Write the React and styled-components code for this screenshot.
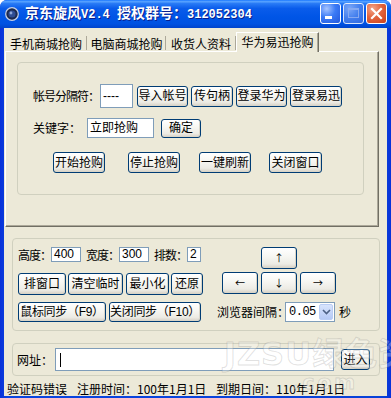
import React from "react";
import styled, { createGlobalStyle } from "styled-components";

const Global = createGlobalStyle`
  html, body { margin: 0; padding: 0; background: #ffffff; }
  body {
    font-family: "Liberation Sans", "Noto Sans CJK SC", sans-serif;
    font-size: 12px;
    color: #000;
  }
  * { box-sizing: border-box; }
`;

const Win = styled.div`
  position: relative;
  width: 391px;
  height: 398px;
  display: flex;
  flex-direction: column;
  background: linear-gradient(90deg, #0831D9 0%, #0A44E0 2%, #0842D8 98%, #0831D9 100%);
  border-radius: 7px 7px 0 0;
  overflow: hidden;
`;

const TitleBar = styled.div`
  flex: none;
  height: 28px;
  display: flex;
  align-items: center;
  padding: 0 4px 1px 5px;
  background: linear-gradient(
    #1A77FF 0%,
    #5AA4FF 6%,
    #2A7CF6 12%,
    #0A5CEB 30%,
    #0055E6 60%,
    #0052E2 85%,
    #0043CC 100%
  );
`;

const TitleText = styled.div`
  margin-left: 6px;
  color: #ffffff;
  font-family: "Noto Sans CJK SC", sans-serif;
  font-weight: 700;
  font-size: 14px;
  line-height: 16px;
  white-space: nowrap;
  text-shadow: 1px 1px 0 #0A1E8C;
`;

const Mono = styled.span`
  font-family: "Liberation Mono", monospace;
  font-size: 12px;
  font-weight: 700;
`;

const TitleButtons = styled.div`
  margin-left: auto;
  display: flex;
  gap: 2px;
`;

const CapBtn = styled.div`
  width: 21px;
  height: 21px;
  border: 1px solid #ffffff;
  border-radius: 3px;
  display: flex;
  align-items: center;
  justify-content: center;
  background: ${(p) =>
    p.$kind === "close"
      ? "radial-gradient(circle at 30% 25%, #F3A58A 0%, #E2653F 45%, #C8401A 100%)"
      : p.$kind === "max"
      ? "radial-gradient(circle at 30% 25%, #8FB4FA 0%, #4F86EE 50%, #3A6EE0 100%)"
      : "radial-gradient(circle at 30% 25%, #A6C4FF 0%, #3B7BF6 45%, #2257DC 100%)"};
  opacity: ${(p) => (p.$kind === "max" ? 0.85 : 1)};
`;

const Content = styled.div`
  flex: 1;
  margin: 0 4px 2px 4px;
  background: #ECE9D8;
  display: flex;
  flex-direction: column;
`;

const TabStrip = styled.div`
  flex: none;
  display: flex;
  align-items: flex-end;
  height: 23px;
  padding: 4px 0 0 1px;
  position: relative;
  z-index: 2;
`;

const Tab = styled.div`
  position: relative;
  width: ${(p) => p.$w}px;
  height: ${(p) => (p.$active ? 20 : 16)}px;
  margin-bottom: ${(p) => (p.$active ? -1 : 0)}px;
  display: flex;
  align-items: center;
  justify-content: center;
  font-family: "Noto Sans CJK SC", sans-serif;
  font-size: 12px;
  white-space: nowrap;
  background: #ECE9D8;
  ${(p) =>
    p.$active
      ? `border-top: 1px solid #ffffff;
         border-left: 1px solid #ffffff;
         border-right: 1px solid #716F64;
         box-shadow: inset -1px 0 0 #ACA899;
         padding-bottom: 3px;`
      : `&::after {
           content: "";
           position: absolute;
           right: 0;
           top: 1px;
           height: 14px;
           width: 1px;
           background: #ACA899;
           box-shadow: 1px 0 0 #ffffff;
         }`}
`;

const Panel = styled.div`
  flex: none;
  margin-left: 1px;
  width: 374px;
  height: 176px;
  border-top: 1px solid #ffffff;
  border-left: 1px solid #ffffff;
  border-right: 1px solid #716F64;
  border-bottom: 1px solid #716F64;
  box-shadow: inset -1px -1px 0 #ACA899;
  padding: 10px 0 0 11px;
`;

const Group = styled.div`
  flex: none;
  width: ${(p) => p.$w}px;
  height: ${(p) => p.$h}px;
  margin: ${(p) => p.$m || "0"};
  border: 1px solid #D0D0BF;
  border-radius: 4px;
  padding: ${(p) => p.$pad || "0"};
`;

const Row = styled.div`
  display: flex;
  align-items: center;
  height: ${(p) => p.$h}px;
  margin-top: ${(p) => p.$mt || 0}px;
  padding-left: ${(p) => p.$pl || 0}px;
`;

const Label = styled.span`
  flex: none;
  width: ${(p) => (p.$w ? `${p.$w}px` : "auto")};
  margin-left: ${(p) => p.$ml || 0}px;
  white-space: nowrap;
  font-family: "Noto Sans CJK SC", sans-serif;
  font-size: 12px;
  line-height: 14px;
  letter-spacing: ${(p) => p.$ls || 0}px;
`;

const TextBox = styled.div`
  flex: none;
  width: ${(p) => p.$w}px;
  height: ${(p) => p.$h}px;
  background: #ffffff;
  border: 1px solid #7F9DB9;
  display: flex;
  align-items: center;
  padding-left: 2px;
  white-space: nowrap;
  overflow: hidden;
  font-size: 12px;
  line-height: 13px;
`;

const Caret = styled.span`
  width: 1px;
  height: 14px;
  background: #000;
  margin-left: 2px;
`;

const Btn = styled.div`
  flex: none;
  width: ${(p) => p.$w}px;
  height: ${(p) => p.$h}px;
  margin-left: ${(p) => p.$ml || 0}px;
  border: 1px solid #003C74;
  border-radius: 3px;
  background: linear-gradient(#FFFFFF 0%, #F7F7F3 40%, #ECEBE4 80%, #D6D0C5 100%);
  box-shadow: inset -1px -1px 0 #D9D5C8;
  display: flex;
  align-items: center;
  justify-content: center;
  white-space: nowrap;
  font-family: "Liberation Sans", "Noto Sans CJK SC", sans-serif;
  font-size: 12px;
  line-height: 14px;
  letter-spacing: ${(p) => p.$ls || 0}px;
`;

const Gap = styled.div`
  height: ${(p) => p.$h}px;
  flex: none;
`;

const Grid2 = styled.div`
  display: grid;
  grid-template-columns: 199px auto;
  grid-template-rows: 48px 20px;
  row-gap: 7px;
`;

const Col = styled.div`
  display: flex;
  flex-direction: column;
`;

const ArrowPad = styled.div`
  margin-left: 5px;
  display: grid;
  grid-template-columns: repeat(3, 36px);
  grid-template-rows: 22px 22px;
  column-gap: 3px;
  row-gap: 3px;
`;

const ArrowBtn = styled(Btn)`
  grid-column: ${(p) => p.$col};
  grid-row: ${(p) => p.$row};
  width: 36px;
  height: 22px;
  font-family: "Noto Sans CJK SC", sans-serif;
  font-size: 10px;
`;

const Select = styled.div`
  flex: none;
  width: 50px;
  height: 20px;
  background: #ffffff;
  border: 1px solid #7F9DB9;
  display: flex;
  align-items: center;
  padding: 1px;
`;

const SelectText = styled.span`
  flex: 1;
  padding-left: 2px;
  font-family: "Liberation Mono", monospace;
  font-size: 12px;
  letter-spacing: -0.5px;
`;

const DropBtn = styled.div`
  width: 14px;
  height: 16px;
  border-radius: 2px;
  border: 1px solid #BACDF5;
  background: linear-gradient(#D8E4FC, #B5C9F5);
  display: flex;
  align-items: center;
  justify-content: center;
`;

const Status = styled.div`
  flex: none;
  height: 20px;
  display: flex;
  padding: 6px 0 0 3px;
`;

const StatusItem = styled.span`
  flex: none;
  width: ${(p) => (p.$w ? `${p.$w}px` : "auto")};
  white-space: nowrap;
  font-family: "Noto Sans CJK SC", sans-serif;
  font-size: 12px;
  line-height: 14px;
`;

const Watermark = styled.div`
  position: absolute;
  left: 224px;
  top: 338px;
  pointer-events: none;
  font-family: "DejaVu Sans", "Noto Sans CJK SC", sans-serif;
  font-weight: 700;
  white-space: nowrap;
  color: rgba(255, 255, 255, 0.3);
  -webkit-text-stroke: 1px rgba(120, 120, 120, 0.22);
  line-height: 1;
`;

const WmLine = styled.div`
  font-size: ${(p) => p.$size}px;
  margin-left: ${(p) => p.$ml || 0}px;
  margin-top: ${(p) => p.$mt || 0}px;
  letter-spacing: ${(p) => p.$ls || 0}px;
`;

function AppIcon() {
  return (
    <svg width="14" height="14" viewBox="0 0 14 14">
      <circle cx="7" cy="7" r="6.3" fill="#1C2A4E" stroke="#C9D2E6" strokeWidth="1.2" />
      <circle cx="7" cy="7" r="3.6" fill="#2F4D93" />
      <circle cx="6" cy="6" r="1.4" fill="#8FA8DA" />
    </svg>
  );
}

export default function App() {
  return (
    <>
      <Global />
      <Win>
        <TitleBar>
          <AppIcon />
          <TitleText>
            京东旋风<Mono>V2.4 </Mono>授权群号：<Mono>312052304</Mono>
          </TitleText>
          <TitleButtons>
            <CapBtn $kind="min">
              <svg width="19" height="19" viewBox="0 0 19 19">
                <rect x="4" y="12" width="7" height="3" fill="#ffffff" />
              </svg>
            </CapBtn>
            <CapBtn $kind="max">
              <svg width="19" height="19" viewBox="0 0 19 19">
                <rect x="4.5" y="4.5" width="10" height="9" fill="none" stroke="#9DB8F2" strokeWidth="1" />
                <rect x="4" y="4" width="11" height="2" fill="#9DB8F2" />
              </svg>
            </CapBtn>
            <CapBtn $kind="close">
              <svg width="19" height="19" viewBox="0 0 19 19">
                <path d="M5 5 L14 14 M14 5 L5 14" stroke="#ffffff" strokeWidth="2.2" strokeLinecap="square" />
              </svg>
            </CapBtn>
          </TitleButtons>
        </TitleBar>

        <Content>
          <TabStrip>
            <Tab $w={82}>手机商城抢购</Tab>
            <Tab $w={79}>电脑商城抢购</Tab>
            <Tab $w={70}>收货人资料</Tab>
            <Tab $w={83} $active>华为易迅抢购</Tab>
          </TabStrip>

          <Panel>
            <Group $w={347} $h={133} $pad="21px 0 0 15px">
              <Row $h={24}>
                <Label $w={67} $ls={-1}>帐号分隔符：</Label>
                <TextBox $w={33} $h={24}>----</TextBox>
                <Btn $w={51} $h={21} $ml={4}>导入帐号</Btn>
                <Btn $w={42} $h={21} $ml={3}>传句柄</Btn>
                <Btn $w={51} $h={21} $ml={3}>登录华为</Btn>
                <Btn $w={52} $h={21} $ml={3}>登录易迅</Btn>
              </Row>
              <Row $h={20} $mt={10}>
                <Label $w={54}>关键字：</Label>
                <TextBox $w={67} $h={20}>立即抢购</TextBox>
                <Btn $w={40} $h={19} $ml={7}>确定</Btn>
              </Row>
              <Row $h={21} $mt={14} $pl={20}>
                <Btn $w={52} $h={21}>开始抢购</Btn>
                <Btn $w={52} $h={21} $ml={23}>停止抢购</Btn>
                <Btn $w={52} $h={21} $ml={19}>一键刷新</Btn>
                <Btn $w={53} $h={21} $ml={18}>关闭窗口</Btn>
              </Row>
            </Group>
          </Panel>

          <Group $w={368} $h={93} $m="11px 0 0 8px" $pad="8px 0 0 5px">
            <Grid2>
              <Col>
                <Row $h={15}>
                  <Label $w={33} $ls={-1}>高度：</Label>
                  <TextBox $w={30} $h={15}>400</TextBox>
                  <Label $w={33} $ml={5} $ls={-1}>宽度：</Label>
                  <TextBox $w={30} $h={15}>300</TextBox>
                  <Label $w={33} $ml={5} $ls={-1}>排数：</Label>
                  <TextBox $w={14} $h={15}>2</TextBox>
                </Row>
                <Gap $h={11} />
                <Row $h={22}>
                  <Btn $w={48} $h={22}>排窗口</Btn>
                  <Btn $w={55} $h={22} $ml={2}>清空临时</Btn>
                  <Btn $w={43} $h={22} $ml={3}>最小化</Btn>
                  <Btn $w={32} $h={22} $ml={2}>还原</Btn>
                </Row>
              </Col>
              <ArrowPad>
                <ArrowBtn $col={2} $row={1}>↑</ArrowBtn>
                <ArrowBtn $col={1} $row={2}>←</ArrowBtn>
                <ArrowBtn $col={2} $row={2}>↓</ArrowBtn>
                <ArrowBtn $col={3} $row={2}>→</ArrowBtn>
              </ArrowPad>
              <Row $h={20}>
                <Btn $w={88} $h={20} $ls={-0.3}>鼠标同步（F9）</Btn>
                <Btn $w={92} $h={20} $ml={3} $ls={-0.3}>关闭同步（F10）</Btn>
              </Row>
              <Row $h={20}>
                <Label $w={68}>浏览器间隔：</Label>
                <Select>
                  <SelectText>0.05</SelectText>
                  <DropBtn>
                    <svg width="9" height="6" viewBox="0 0 9 6">
                      <path d="M1 1 L4.5 4.5 L8 1" fill="none" stroke="#4D6185" strokeWidth="1.6" />
                    </svg>
                  </DropBtn>
                </Select>
                <Label $ml={4}>秒</Label>
              </Row>
            </Grid2>
          </Group>

          <Group $w={368} $h={33} $m="12px 0 0 8px" $pad="0 0 0 4px">
            <Row $h={31}>
              <Label $w={38}>网址：</Label>
              <TextBox $w={279} $h={23}>
                <Caret />
              </TextBox>
              <Btn $w={29} $h={21} $ml={7}>进入</Btn>
            </Row>
          </Group>

          <Status>
            <StatusItem $w={70}>验证码错误</StatusItem>
            <StatusItem $w={139}>注册时间：100年1月1日</StatusItem>
            <StatusItem>到期日间：110年1月1日</StatusItem>
          </Status>
        </Content>

        <Watermark>
          <WmLine $size={32} $ls={1}>JZSU绿色资</WmLine>
          <WmLine $size={20} $ml={68} $mt={2} $ls={3}>.com</WmLine>
        </Watermark>
      </Win>
    </>
  );
}
